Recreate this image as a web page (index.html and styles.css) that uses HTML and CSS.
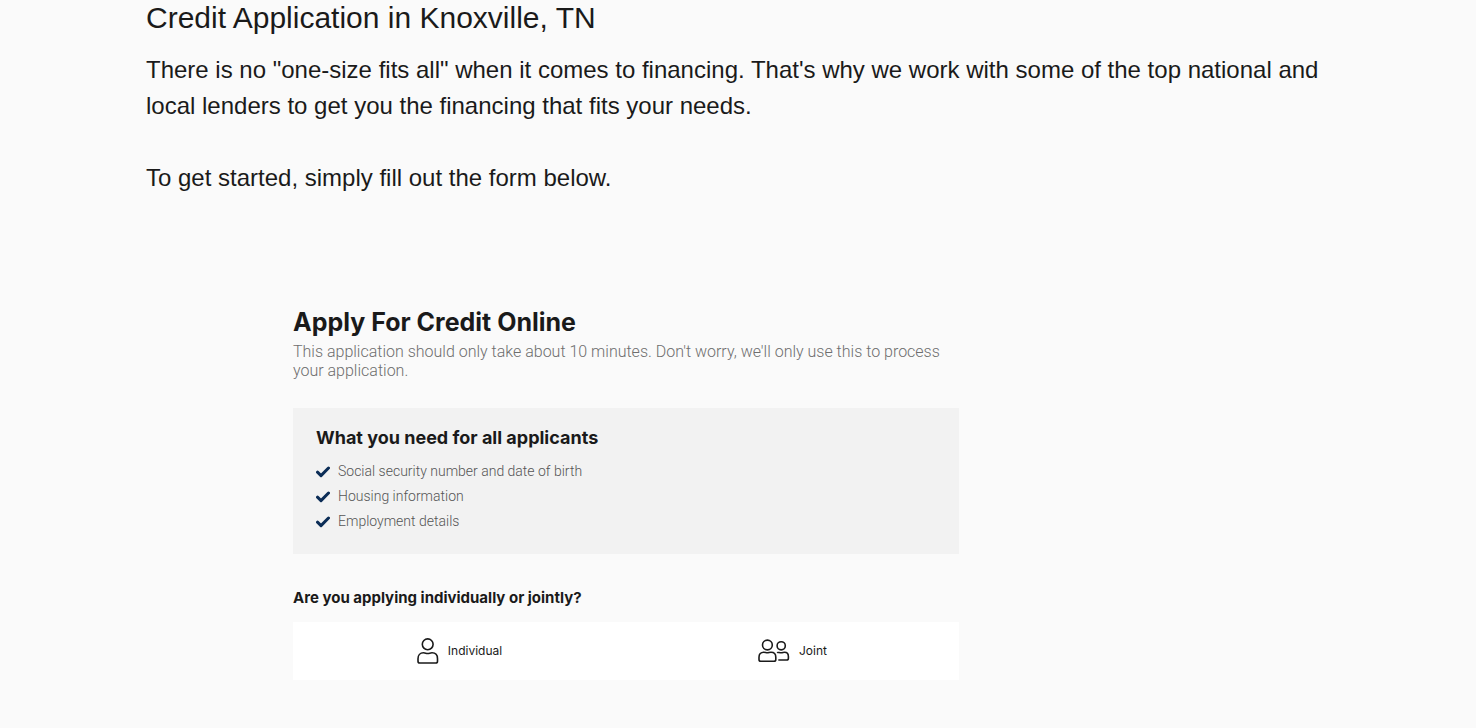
FILE: index.html
```html
<!DOCTYPE html>
<html lang="en">
<head>
<meta charset="utf-8">
<meta name="viewport" content="width=device-width, initial-scale=1">
<title>Credit Application in Knoxville, TN</title>
<link rel="stylesheet" href="styles.css">
</head>
<body>
<main class="page">
  <section class="intro">
    <h1 class="intro-title">Credit Application in Knoxville, TN</h1>
    <p class="intro-text">There is no "one-size fits all" when it comes to financing. That's why we work with some of the top national and local lenders to get you the financing that fits your needs.</p>
    <p class="intro-text">To get started, simply fill out the form below.</p>
  </section>
  <form class="application">
    <h2 class="application-title">Apply For Credit Online</h2>
    <p class="application-text">This application should only take about 10 minutes. Don't worry, we'll only use this to process your application.</p>
    <section class="needs">
      <h3 class="needs-title">What you need for all applicants</h3>
      <ul class="needs-list">
        <li class="needs-item"><svg class="check" viewBox="0 0 14 12" aria-hidden="true"><path d="M1.5 6.2 5 9.6 12.5 2"/></svg>Social security number and date of birth</li>
        <li class="needs-item"><svg class="check" viewBox="0 0 14 12" aria-hidden="true"><path d="M1.5 6.2 5 9.6 12.5 2"/></svg>Housing information</li>
        <li class="needs-item"><svg class="check" viewBox="0 0 14 12" aria-hidden="true"><path d="M1.5 6.2 5 9.6 12.5 2"/></svg>Employment details</li>
      </ul>
    </section>
    <fieldset class="choice">
      <legend class="choice-title">Are you applying individually or jointly?</legend>
      <div class="choice-options">
        <label class="option" for="individual">
          <input class="option-input" type="radio" id="individual" name="applicants" value="individual">
          <svg class="person" viewBox="0 0 22 26" aria-hidden="true"><circle cx="10.7" cy="6.3" r="5.4"/><path d="M6.5 14.8C3 14.8 1 17.2 1 20.7V23.2Q1 25 2.8 25H18.7Q20.5 25 20.5 23.2V20.7C20.5 17.2 18.5 14.8 15 14.8C13 14.8 12.5 15.5 10.7 15.5S8.5 14.8 6.5 14.8Z"/></svg>
          <span>Individual</span>
        </label>
        <label class="option" for="joint">
          <input class="option-input" type="radio" id="joint" name="applicants" value="joint">
          <svg class="people" viewBox="0 0 32 24" aria-hidden="true"><circle cx="9.4" cy="6" r="4.9"/><path d="M5.8 13.2C2.7 13.2 1 15.2 1 18.2V20.4Q1 22.2 2.8 22.2H16Q17.8 22.2 17.8 20.4V18.2C17.8 15.2 16 13.2 13 13.2C11.2 13.2 10.8 13.7 9.3 13.7S7.5 13.2 5.8 13.2Z"/><circle cx="23.2" cy="6.8" r="4.1"/><path d="M19 13.7C20 13 21 13.7 23 13.7S25 13.3 26.5 13.3C29 13.3 30.4 15 30.4 17.5V19.2Q30.4 21 28.6 21H20.3"/></svg>
          <span>Joint</span>
        </label>
      </div>
    </fieldset>
  </form>
</main>
</body>
</html>
```
FILE: styles.css
```css
* {
  box-sizing: border-box;
}

body {
  margin: 0;
  background: #fafafa;
  color: #1a1a1a;
  font-family: "Liberation Sans", Arial, sans-serif;
}

h1, h2, h3, p, ul {
  margin: 0;
}

.page {
  padding: 0 146px 48px;
}

.intro-title {
  margin-bottom: 16px;
  font-size: 30px;
  font-weight: 400;
  line-height: 36px;
}

.intro-text {
  margin-bottom: 36px;
  font-size: 24px;
  line-height: 36px;
}

.application {
  max-width: 813px;
  margin-top: 108px;
  padding-left: 147px;
}

.application-title {
  font-family: Inter, sans-serif;
  font-size: 25px;
  font-weight: 700;
  line-height: 36px;
}

.application-text {
  margin-top: 2px;
  color: #6e6e6e;
  font-family: Roboto, sans-serif;
  font-size: 16px;
  font-weight: 300;
  line-height: 19px;
}

.needs {
  margin-top: 28px;
  padding: 20px 23px;
  background: #f2f2f2;
}

.needs-title {
  margin-bottom: 11px;
  font-family: Inter, sans-serif;
  font-size: 18px;
  font-weight: 700;
  line-height: 20px;
}

.needs-list {
  padding: 0;
  list-style: none;
}

.needs-item {
  display: flex;
  align-items: center;
  gap: 8px;
  color: #555;
  font-family: Roboto, sans-serif;
  font-size: 14px;
  font-weight: 300;
  line-height: 25px;
}

.check {
  width: 14px;
  height: 12px;
  fill: none;
  stroke: #0c2d57;
  stroke-width: 3;
  stroke-linecap: round;
  stroke-linejoin: round;
}

.choice {
  min-width: 0;
  margin: 34px 0 0;
  padding: 0;
  border: 0;
}

.choice-title {
  padding: 0;
  font-family: Inter, sans-serif;
  font-size: 15px;
  font-weight: 700;
  line-height: 20px;
}

.choice-options {
  display: grid;
  grid-template-columns: 1fr 1fr;
  margin-top: 14px;
  background: #fff;
}

.option {
  position: relative;
  display: flex;
  align-items: center;
  justify-content: center;
  gap: 9px;
  padding: 16px;
  font-family: Inter, sans-serif;
  font-size: 12px;
  line-height: 26px;
  cursor: pointer;
}

.option-input {
  position: absolute;
  inset: 0;
  width: 100%;
  height: 100%;
  margin: 0;
  opacity: 0;
  cursor: pointer;
}

.option:focus-within {
  outline: 2px solid #0c2d57;
}

.person,
.people {
  fill: none;
  stroke: #1a1a1a;
  stroke-width: 1.6;
}

.person {
  width: 22px;
  height: 26px;
}

.people {
  width: 32px;
  height: 24px;
}
```
